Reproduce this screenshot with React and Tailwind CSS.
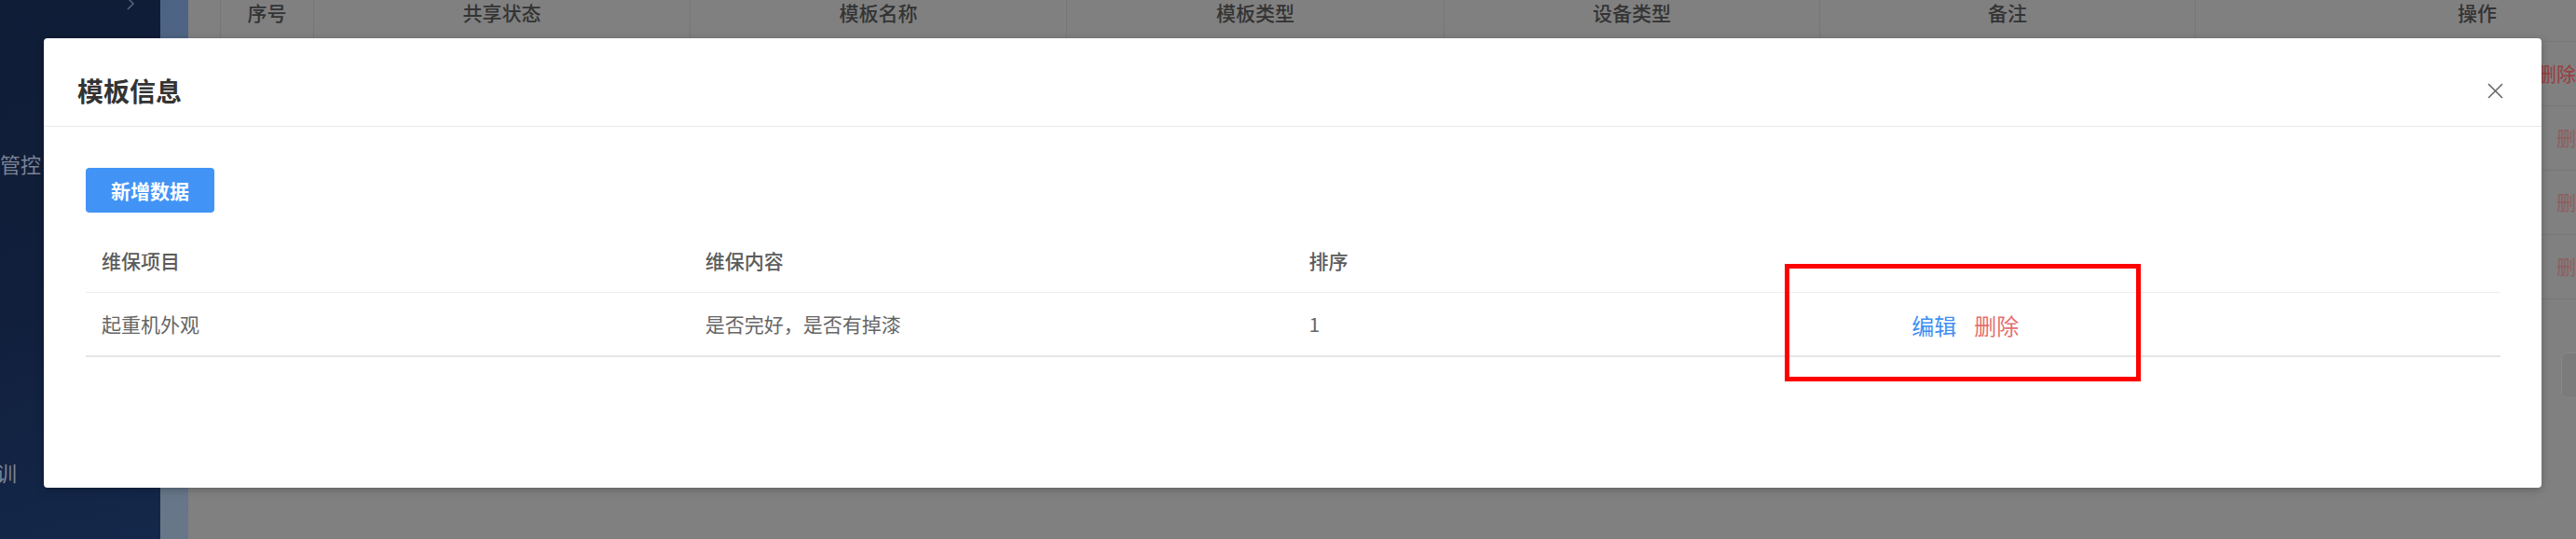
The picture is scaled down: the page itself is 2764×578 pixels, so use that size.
const bgCols = [
  { w: "w-[35px]", label: "" },
  { w: "w-[100px]", label: "序号" },
  { w: "w-[404px]", label: "共享状态" },
  { w: "w-[404px]", label: "模板名称" },
  { w: "w-[405px]", label: "模板类型" },
  { w: "w-[403px]", label: "设备类型" },
  { w: "w-[403px]", label: "备注" },
];

const rows = [
  { pad: "pl-[366px]", text: "删除", color: "text-[#983d3d]" },
  { pad: "pl-[387px]", text: "删除", color: "text-[#8c5f5f]" },
  { pad: "pl-[387px]", text: "删除", color: "text-[#8c5f5f]" },
  { pad: "pl-[387px]", text: "删除", color: "text-[#8c5f5f]" },
];

function Sidebar() {
  return (
    <div className="flex shrink-0">
      <div className="w-[172px] h-[578px] bg-[linear-gradient(165deg,#101d37_0%,#111f3c_55%,#14284b_100%)] flex flex-col text-[#7c8494] text-[22px]">
        <div className="h-[14px] flex justify-end pr-[27px] overflow-hidden">
          <svg width="10" height="14" viewBox="0 0 10 14" className="mt-[-3px]">
            <polyline points="2,1 8,7 2,13" fill="none" stroke="#55627a" strokeWidth="1.6" />
          </svg>
        </div>
        <div className="mt-[146px] leading-[30px] whitespace-nowrap">管控</div>
        <div className="mt-[301px] ml-[-26px] leading-[30px] whitespace-nowrap">培训</div>
      </div>
      <div className="w-[30px] h-[578px] bg-[linear-gradient(180deg,#4d6384_0%,#5d6f88_50%,#687788_100%)]" />
    </div>
  );
}

function BackTable() {
  return (
    <div className="flex-1 h-[578px] bg-[#808080] overflow-hidden">
      <div className="flex h-[45px] border-b border-[#777] text-[21px] font-medium text-[#333] leading-[26px] whitespace-nowrap">
        {bgCols.map((c, i) => (
          <div key={i} className={`${c.w} shrink-0 text-center border-r border-[#767676]`}>
            {c.label}
          </div>
        ))}
        <div className="w-[604px] shrink-0 text-center">操作</div>
      </div>
      {rows.map((r, i) => (
        <div key={i} className="flex h-[69px] border-b border-[#777] items-center text-[21px] whitespace-nowrap">
          <div className="w-[2154px] shrink-0" />
          <div className={`w-[604px] shrink-0 ${r.pad} ${r.color}`}>{r.text}</div>
        </div>
      ))}
    </div>
  );
}

function TemplateModal() {
  return (
    <div className="absolute left-[47px] top-[41px] w-[2680px] h-[482px] bg-white rounded-[4px] shadow-[0_2px_10px_rgba(0,0,0,0.25)] flex flex-col">
      <div className="flex items-center justify-between pt-[35px] pb-[17px] pl-[36px] pr-[41px] border-b border-[#e8e8e8]">
        <div className="text-[28px] leading-[42px] font-semibold text-[#333]">模板信息</div>
        <svg width="17" height="17" viewBox="0 0 17 17">
          <line x1="1" y1="1" x2="16" y2="16" stroke="#606060" strokeWidth="1.5" />
          <line x1="16" y1="1" x2="1" y2="16" stroke="#606060" strokeWidth="1.5" />
        </svg>
      </div>
      <div className="pt-[44px] pl-[45px] pr-[44px]">
        <button className="w-[138px] h-[48px] rounded-[4px] bg-[#4194f6] text-white text-[21px] font-semibold leading-none">
          新增数据
        </button>
        <div className="mt-[18px] text-[21px]">
          <div className="grid grid-cols-4 h-[68px] items-center border-b border-[#efede9] text-[#5c5c5c] font-medium">
            <div className="px-[17px]">维保项目</div>
            <div className="px-[17px]">维保内容</div>
            <div className="px-[17px]">排序</div>
            <div className="px-[17px]" />
          </div>
          <div className="grid grid-cols-4 h-[69px] items-center border-b-2 border-[#e6e6e6] text-[#666]">
            <div className="px-[17px]">起重机外观</div>
            <div className="px-[17px]">是否完好，是否有掉漆</div>
            <div className="px-[17px]">1</div>
            <div className="pl-[16px] flex gap-[19px] text-[24px] leading-[32px] pt-[3px]">
              <span className="text-[#3f8ff0]">编辑</span>
              <span className="text-[#e46f6f]">删除</span>
            </div>
          </div>
        </div>
      </div>
    </div>
  );
}

export default function App() {
  return (
    <div
      className="relative w-[2764px] h-[578px] overflow-hidden flex"
      style={{ fontFamily: '"Noto Sans CJK SC", "Noto Sans", sans-serif' }}
    >
      <Sidebar />
      <BackTable />
      <div className="absolute left-[2748px] top-[378px] w-[40px] h-[49px] rounded-[6px] bg-[#7b7b7b] border border-[#868686]" />
      <TemplateModal />
      <div className="absolute left-[1915px] top-[283px] w-[382px] h-[126px] border-[5px] border-[#ff0000]" />
    </div>
  );
}
